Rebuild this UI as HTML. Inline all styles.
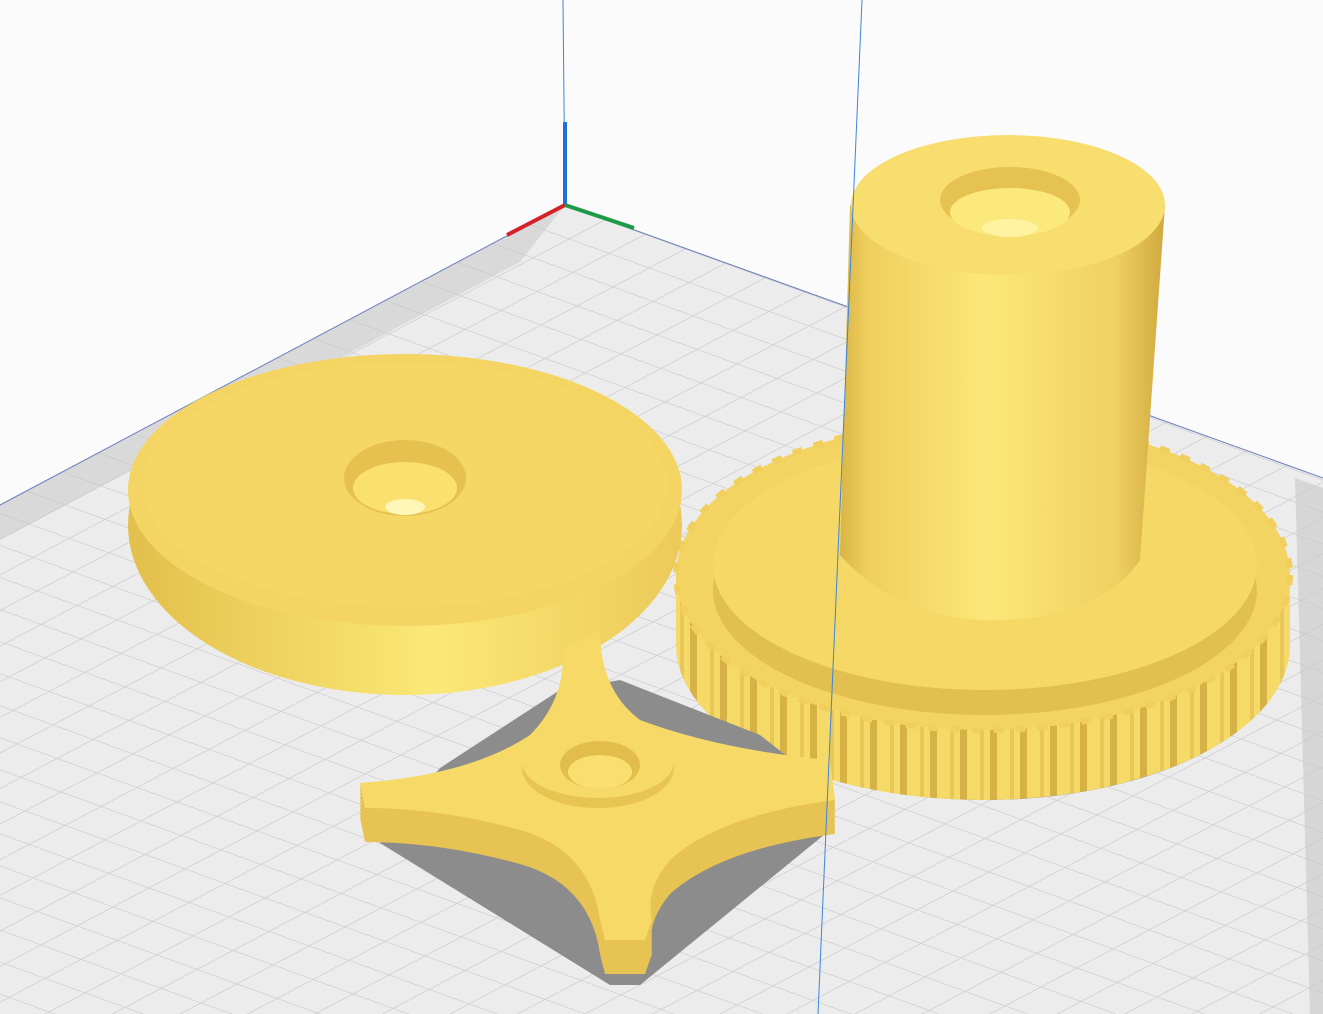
<!DOCTYPE html>
<html><head><style>html,body{margin:0;padding:0;background:#fbfbfb;overflow:hidden}svg{display:block}</style></head>
<body>
<svg width="1323" height="1014" viewBox="0 0 1323 1014" xmlns="http://www.w3.org/2000/svg">
<defs>
<pattern id="g" width="1" height="1" patternUnits="userSpaceOnUse" patternTransform="matrix(40 14.5 -36 19 565 205)">
<rect width="1" height="1" fill="#ececec"/>
<path d="M0 0H1M0 0V1" stroke="#cfcfcf" stroke-width="0.05" fill="none"/>
</pattern>
<linearGradient id="side" x1="0" x2="1">
<stop offset="0" stop-color="#e3bf4c"/><stop offset=".55" stop-color="#fbe876"/><stop offset="1" stop-color="#ecc95a"/></linearGradient>
<linearGradient id="cyl" x1="0" x2="1">
<stop offset="0" stop-color="#d8b444"/><stop offset=".08" stop-color="#efce5e"/><stop offset=".45" stop-color="#fbe878"/><stop offset=".85" stop-color="#f0d062"/><stop offset="1" stop-color="#cfa93f"/></linearGradient>
<pattern id="teeth" width="30" height="10" patternUnits="userSpaceOnUse">
<rect width="30" height="10" fill="#f6da68"/><rect x="0" width="7" height="10" fill="#d6b146"/><rect x="20" width="4" height="10" fill="#e8c658"/>
</pattern>
<clipPath id="rim"><path d="M676,575 L676,645 A307,155 0 0 0 1290,645 L1290,575Z"/></clipPath>
<path id="st" d="M360,783 Q470,775 530,735 Q565,700 563,650 L600,630 Q600,690 640,720 Q720,750 830,760 L835,800 Q720,815 670,860 Q645,890 652,920 L645,940 L605,940 L600,920 Q590,850 520,830 Q440,808 365,808Z"/>
</defs>
<polygon points="565,205 1323,478 1323,1014 0,1014 0,505" fill="url(#g)"/>
<polygon points="565,205 0,505 0,540 520,262" fill="#c6c6c6" opacity=".5"/>
<polygon points="1295,478 1323,488 1323,1014 1310,1014" fill="#c8c8c8" opacity=".6"/>
<line x1="565" y1="205" x2="1323" y2="478" stroke="#6c7fbf" stroke-width="1"/>
<line x1="565" y1="205" x2="0" y2="505" stroke="#6c7fbf" stroke-width="1"/>
<line x1="563" y1="0" x2="565" y2="205" stroke="#3c85e0" stroke-width="1"/>
<line x1="565" y1="122" x2="565" y2="205" stroke="#1f6fe0" stroke-width="4"/>
<line x1="565" y1="205" x2="507" y2="235" stroke="#d2232a" stroke-width="4"/>
<line x1="565" y1="205" x2="634" y2="228" stroke="#1d9a45" stroke-width="4"/>
<!-- gear -->
<ellipse cx="985" cy="648" rx="302" ry="152" fill="#8a8a8a"/>
<rect x="676" y="560" width="614" height="250" fill="url(#teeth)" clip-path="url(#rim)"/>
<ellipse cx="983" cy="575" rx="307" ry="155" fill="#f3d462" stroke="#f0cf5c" stroke-width="6" stroke-dasharray="10 12"/>
<ellipse cx="985" cy="590" rx="272" ry="125" fill="#e2c050"/>
<ellipse cx="985" cy="565" rx="272" ry="125" fill="#f5d866"/>
<!-- cylinder -->
<path d="M850,205 L840,555 Q900,622 1000,620 Q1100,618 1140,560 L1165,205Z" fill="url(#cyl)"/>
<ellipse cx="1008" cy="205" rx="157" ry="70" fill="#f8de6e"/>
<ellipse cx="1010" cy="200" rx="70" ry="33" fill="#e6c252"/>
<ellipse cx="1010" cy="212" rx="60" ry="24" fill="#fbe97c"/>
<ellipse cx="1010" cy="228" rx="28" ry="9" fill="#fff2a0"/>
<!-- disc -->
<ellipse cx="405" cy="525" rx="277" ry="170" fill="url(#side)"/>
<ellipse cx="405" cy="490" rx="277" ry="136" fill="#f4d563"/>
<ellipse cx="405" cy="485" rx="262" ry="122" fill="#f5d766"/>
<ellipse cx="405" cy="478" rx="61" ry="38" fill="#e6c150"/>
<ellipse cx="405" cy="488" rx="52" ry="26" fill="#fae06e"/>
<ellipse cx="405" cy="507" rx="20" ry="8" fill="#fff7b8"/>
<!-- star shadow -->
<polygon points="380,843 440,768 560,690 620,680 760,735 830,790 830,830 640,985 610,985" fill="#8c8c8c"/>
<!-- star -->
<g fill="#e6c352">
<use href="#st" y="34"/><use href="#st" y="30"/><use href="#st" y="26"/><use href="#st" y="22"/><use href="#st" y="18"/><use href="#st" y="14"/><use href="#st" y="10"/><use href="#st" y="6"/><use href="#st" y="3"/>
</g>
<use href="#st" fill="#f6d966"/>
<ellipse cx="598" cy="768" rx="76" ry="40" fill="#e8c453"/>
<ellipse cx="598" cy="762" rx="76" ry="36" fill="#f6d968"/>
<ellipse cx="600" cy="765" rx="40" ry="24" fill="#e2bd4c"/>
<ellipse cx="600" cy="772" rx="32" ry="17" fill="#f8df70"/>
<line x1="862" y1="0" x2="818" y2="1014" stroke="#3c85e0" stroke-width="1"/>
</svg>
</body></html>
